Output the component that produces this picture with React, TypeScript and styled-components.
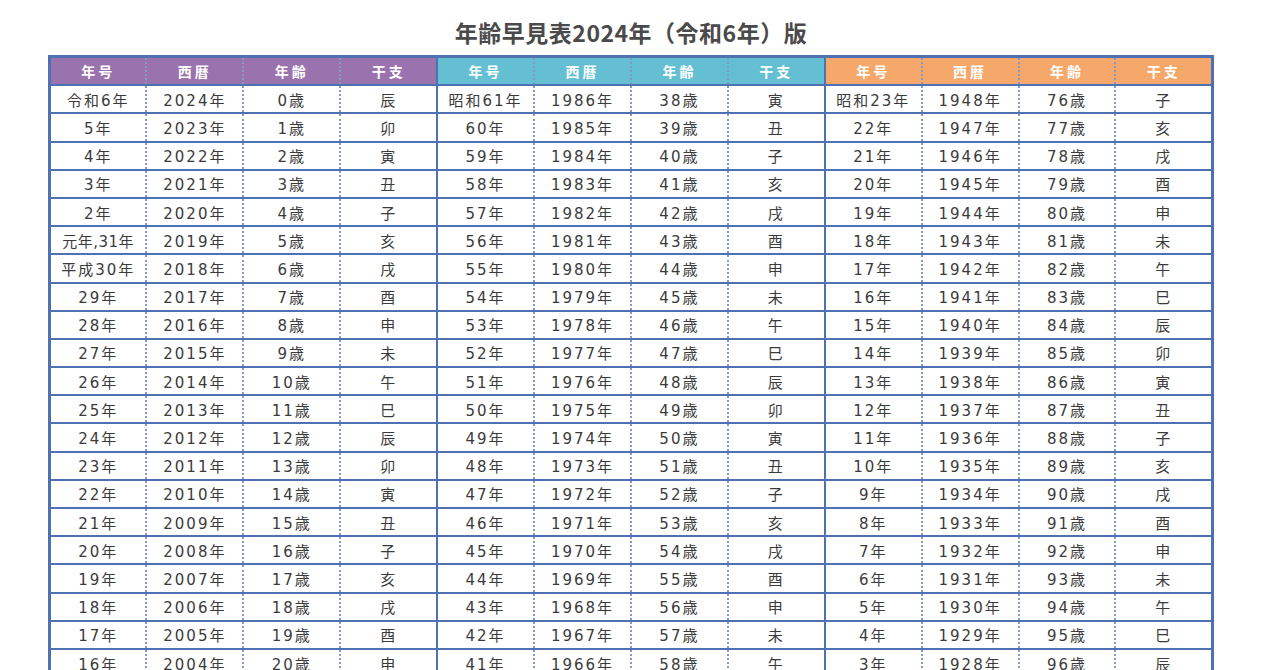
import { createGlobalStyle } from 'styled-components'
import styled from 'styled-components'

const CURRENT = 2024
const ROWS = 38
const ETO = ['子', '丑', '寅', '卯', '辰', '巳', '午', '未', '申', '酉', '戌', '亥']

type Group = 'purple' | 'teal' | 'orange'

const HEAD_COLORS: Record<Group, string> = {
  purple: '#9a72ad',
  teal: '#64bfd3',
  orange: '#f6a86a',
}

const GROUPS: Group[] = ['purple', 'teal', 'orange']
const HEADS = ['年号', '西暦', '年齢', '干支']

// era name of a year, the era prefix is shown only on some rows
const eraOf = (y: number): { era: string; text: string; gannen: boolean } => {
  if (y === 2019) return { era: '', text: '元年,31年', gannen: true }
  if (y > 2019) return { era: '令和', text: `${y - 2018}年`, gannen: false }
  if (y === 1989) return { era: '', text: '元年,64年', gannen: true }
  if (y > 1989) return { era: '平成', text: `${y - 1988}年`, gannen: false }
  if (y === 1926) return { era: '', text: '元年,15年', gannen: true }
  if (y > 1926) return { era: '昭和', text: `${y - 1925}年`, gannen: false }
  if (y === 1912) return { era: '', text: '元年,45年', gannen: true }
  if (y > 1912) return { era: '大正', text: `${y - 1911}年`, gannen: false }
  return { era: '明治', text: `${y - 1867}年`, gannen: false }
}

const buildRows = () =>
  Array.from({ length: ROWS }, (_, row) =>
    GROUPS.map((_, g) => {
      const year = CURRENT - g * ROWS - row
      const cur = eraOf(year)
      const prev = eraOf(year + 1)
      const showEra = row === 0 || prev.gannen
      return {
        wareki: showEra ? cur.era + cur.text : cur.text,
        tight: cur.gannen,
        year: `${year}年`,
        age: `${CURRENT - year}歳`,
        eto: ETO[(((year - 4) % 12) + 12) % 12],
      }
    }),
  )

const App = () => {
  const rows = buildRows()

  return (
    <>
      <GlobalStyle />
      <Page>
        <Title>年齢早見表2024年（令和6年）版</Title>
        <Table>
          <colgroup>
            {Array.from({ length: 12 }, (_, i) => (
              <col key={i} style={{ width: `${100 / 12}%` }} />
            ))}
          </colgroup>
          <thead>
            <tr>
              {GROUPS.map(g =>
                HEADS.map((h, i) => (
                  <HeadCell key={g + h} $group={g} $first={i === 0}>
                    {h}
                  </HeadCell>
                )),
              )}
            </tr>
          </thead>
          <tbody>
            {rows.map((groups, r) => (
              <tr key={r}>
                {groups.map((d, g) => [
                  <Cell key={`${g}a`} $first $tight={d.tight}>
                    {d.wareki}
                  </Cell>,
                  <Cell key={`${g}b`}>{d.year}</Cell>,
                  <Cell key={`${g}c`}>{d.age}</Cell>,
                  <Cell key={`${g}d`}>{d.eto}</Cell>,
                ])}
              </tr>
            ))}
          </tbody>
        </Table>
      </Page>
    </>
  )
}

const GlobalStyle = createGlobalStyle`
  html, body {
    margin: 0;
    overflow: hidden;
    background: #ffffff;
  }
  body {
    font-family: "DejaVu Sans", "Noto Sans CJK JP", sans-serif;
    color: #3b3b3b;
  }
`

const Page = styled.div`
  width: 1166px;
  margin-left: 48px;
  padding-top: 17px;
  display: flex;
  flex-direction: column;
  align-items: center;
`

const Title = styled.h1`
  margin: 0 0 8px;
  font-family: "Noto Sans CJK JP", sans-serif;
  font-size: 23px;
  line-height: 30px;
  font-weight: 700;
  color: #4a4a4a;
  letter-spacing: 0.5px;
`

const Table = styled.table`
  width: 100%;
  table-layout: fixed;
  border-collapse: collapse;
  border: 3px solid #4d71b3;
`

const HeadCell = styled.th<{ $group: Group; $first: boolean }>`
  height: 26.2px;
  padding: 0;
  background: ${p => HEAD_COLORS[p.$group]};
  color: #ffffff;
  font-family: "Noto Sans CJK JP", sans-serif;
  font-size: 14px;
  font-weight: 700;
  letter-spacing: 3px;
  text-align: center;
  border-bottom: 2px solid #4d71b3;
  border-left: ${p => (p.$first ? '2px solid #4d71b3' : '2px dotted #8199cb')};
`

const Cell = styled.td<{ $first?: boolean; $tight?: boolean }>`
  height: 26.2px;
  padding: 0;
  font-size: 15px;
  letter-spacing: ${p => (p.$tight ? '0.5px' : '2px')};
  text-align: center;
  white-space: nowrap;
  border-top: 2px solid #4d71b3;
  border-left: ${p => (p.$first ? '2px solid #4d71b3' : '2px dotted #8199cb')};
`

export default App
